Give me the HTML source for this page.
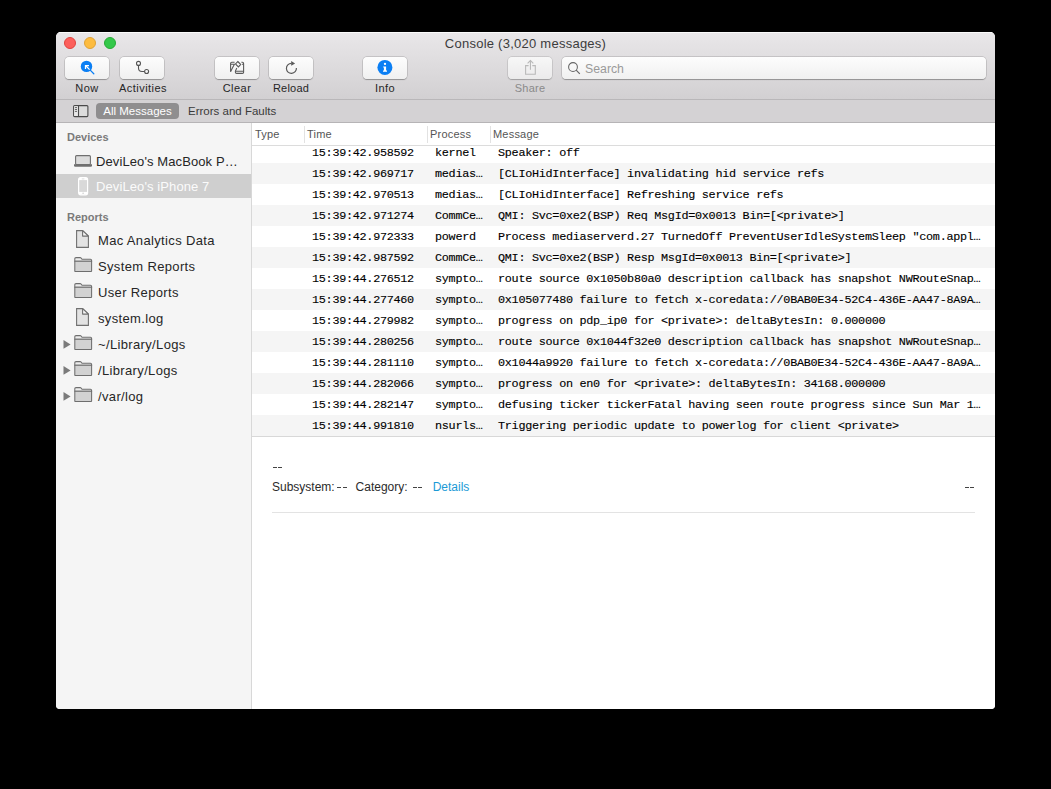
<!DOCTYPE html>
<html><head><meta charset="utf-8">
<style>
*{margin:0;padding:0;box-sizing:border-box}
html,body{width:1051px;height:789px;background:#000;overflow:hidden;font-family:"Liberation Sans",sans-serif}
svg{position:absolute;overflow:visible}
.win{position:absolute;left:56px;top:32px;width:939px;height:677px;border-radius:5px 5px 4px 4px;overflow:hidden;background:#fff}
.tb{position:absolute;left:0;top:0;width:939px;height:68px;background:linear-gradient(#e9e7e9,#d2d0d2);border-bottom:1px solid #b9b7b9;box-shadow:inset 0 1px 0 #fafafa}
.title{position:absolute;left:0;width:939px;top:4px;text-align:center;font-size:13px;letter-spacing:0.25px;color:#3c3c3c;line-height:16px}
.tl{position:absolute;top:5px;width:12px;height:12px;border-radius:50%}
.btn{position:absolute;top:25px;height:22px;width:44px;border-radius:4px;background:linear-gradient(#fdfdfd,#f0f0f0);box-shadow:0 0 0 0.5px rgba(0,0,0,0.2),0 0.5px 1px rgba(0,0,0,0.25)}
.lbl{position:absolute;top:49px;font-size:11px;letter-spacing:0.45px;color:#262626;text-align:center;width:80px;line-height:14px}
.sub{position:absolute;left:0;top:68px;width:939px;height:23px;background:#d4d2d4;border-bottom:1px solid #b6b4b6}
.pill{position:absolute;left:40px;top:3px;width:83px;height:16px;border-radius:4px;background:#8f8e8f;color:#fff;font-size:11.5px;line-height:16px;text-align:center}
.sub .ef{position:absolute;left:132px;top:3px;font-size:11.5px;line-height:16px;color:#3a3a3a}
.side{position:absolute;left:0;top:91px;width:196px;height:586px;background:#f5f5f5;border-right:1px solid #d8d8d8}
.sh{position:absolute;left:11px;font-size:11px;font-weight:bold;color:#7a7a7a;line-height:14px}
.si{position:absolute;left:0;width:195px;height:24px;font-size:13px;letter-spacing:0.25px;color:#262626;line-height:24px}
.si span{position:absolute;left:42px;top:-1px;letter-spacing:0.35px}
.dv span{left:40px;top:0;letter-spacing:0.1px}
.content{position:absolute;left:196px;top:91px;width:743px;height:586px;background:#fff}
.hdr{position:absolute;left:0;top:0;width:743px;height:23px;border-bottom:1px solid #dcdcdc;background:#fff;z-index:2}
.hdr span{position:absolute;top:4px;font-size:11px;letter-spacing:0.2px;color:#555;line-height:14px}
.hdr i{position:absolute;top:3px;width:1px;height:17px;background:#e2e2e2}
.rows{position:absolute;left:0;top:19px;width:743px}
.r{height:21px;position:relative;font-family:"Liberation Mono",monospace;font-size:11.8px;letter-spacing:-0.285px;color:#000;line-height:22px;white-space:pre;-webkit-text-stroke:0.12px #000}
.r:nth-child(even){background:#f5f5f5}
.r span{position:absolute;top:0}
.c1{left:60px}.c2{left:183px}.c3{left:246px}
.sep{position:absolute;left:0;top:313px;width:743px;height:1px;background:#d8d8d8}
.det{position:absolute;font-size:12px;color:#2b2b2b;line-height:15px}
.dd{position:absolute;width:9.6px;height:1.2px;background:linear-gradient(90deg,#444 0,#444 4.1px,transparent 4.1px,transparent 5.5px,#444 5.5px)}
</style></head><body>
<div class="win">
  <div class="tb">
    <div class="title">Console (3,020 messages)</div>
    <div class="tl" style="left:8px;background:#fc605c;border:0.5px solid #e0443e"></div>
    <div class="tl" style="left:28px;background:#fdbc40;border:0.5px solid #dea236"></div>
    <div class="tl" style="left:48px;background:#34c84a;border:0.5px solid #27aa35"></div>
    <div class="btn" style="left:9px"></div>
    <div class="btn" style="left:64px"></div>
    <div class="btn" style="left:159px"></div>
    <div class="btn" style="left:213px"></div>
    <div class="btn" style="left:307px"></div>
    <div class="btn" style="left:452px;opacity:0.8"></div>
    <div class="btn" style="left:506px;width:424px;border-radius:4px"></div>
    <!-- Now icon -->
    <svg style="left:20px;top:24px" width="24" height="22" viewBox="0 0 24 22">
      <circle cx="10.5" cy="10.4" r="5.7" fill="#0b7ff4"/>
      <line x1="14.2" y1="14.1" x2="17.8" y2="17.7" stroke="#0b7ff4" stroke-width="1.3" stroke-linecap="round"/>
      <line x1="9.5" y1="9.5" x2="13.6" y2="13.6" stroke="#fff" stroke-width="1.2"/>
      <path d="M13 9.5 H9.5 V13" fill="none" stroke="#fff" stroke-width="1.25"/><path d="M9 9 H11.2 L9 11.2 Z" fill="#fff"/>
    </svg>
    <!-- Activities icon -->
    <svg style="left:74px;top:24px" width="24" height="22" viewBox="0 0 24 22">
      <circle cx="8.5" cy="7.4" r="2" fill="none" stroke="#555" stroke-width="1.1"/>
      <circle cx="16.6" cy="15.5" r="2" fill="none" stroke="#555" stroke-width="1.1"/>
      <path d="M8.5 9.4 V12 Q8.5 15.5 12 15.5 H14.6" fill="none" stroke="#555" stroke-width="1.1"/>
    </svg>
    <!-- Clear icon -->
    <svg style="left:169px;top:24px" width="24" height="22" viewBox="0 0 24 22">
      <g fill="none" stroke="#5a5a5a" stroke-width="1.1">
        <path d="M5.6 15.8 V7.4 Q5.6 6.3 6.8 6.3 H9.6"/>
        <path d="M5.6 8.2 H9.4 L5.6 15.6"/>
        <path d="M12.8 5.5 L15.7 8.5 L13.4 10.9 L10.5 7.9 Z"/>
        <path d="M16.4 6.3 H17.4 Q18.6 6.3 18.6 7.5 V16.2 Q18.6 17.4 17.4 17.4 H11.6 Q10.4 17.4 10.4 16.2 V15 L11.8 12"/>
        <path d="M17 8.2 H18.6"/>
        <path d="M10.4 15.2 H18.6"/>
      </g>
    </svg>
    <!-- Reload icon -->
    <svg style="left:223px;top:24px" width="24" height="22" viewBox="0 0 24 22">
      <path d="M12.4 7.4 A5 5 0 1 0 17.4 12" fill="none" stroke="#5a5a5a" stroke-width="1.2"/>
      <path d="M12.2 5.1 L16.1 7.4 L12.2 9.8 Z" fill="#5a5a5a"/>
    </svg>
    <!-- Info icon -->
    <svg style="left:317px;top:24px" width="24" height="22" viewBox="0 0 24 22">
      <circle cx="11.9" cy="11.4" r="7.5" fill="#0b7ff4"/>
      <circle cx="12" cy="7.9" r="1.15" fill="#fff"/>
      <path d="M10.2 10.4 H13.1 V14.6 H14 V15.8 H10 V14.6 H10.9 V11.5 H10.2 Z" fill="#fff"/>
    </svg>
    <!-- Share icon -->
    <svg style="left:462px;top:24px" width="24" height="22" viewBox="0 0 24 22">
      <g fill="none" stroke="#b9b9b9" stroke-width="1.1">
        <path d="M10.6 9.6 H7.6 V18.3 H17.3 V9.6 H14.3"/>
        <path d="M12.45 13.8 V4.6"/>
        <path d="M9.6 7.3 L12.45 4.5 L15.3 7.3"/>
      </g>
    </svg>
    <!-- Search -->
    <svg style="left:504px;top:24px" width="30" height="22" viewBox="0 0 30 22">
      <circle cx="13" cy="11" r="4.4" fill="none" stroke="#666" stroke-width="1.05"/>
      <line x1="16.2" y1="14.2" x2="19.8" y2="17.8" stroke="#666" stroke-width="1.2"/>
    </svg>
    <div style="position:absolute;left:529px;top:30px;font-size:12.3px;color:#9a9a9a;line-height:14px">Search</div>
    <div class="lbl" style="left:-9px">Now</div>
    <div class="lbl" style="left:47px">Activities</div>
    <div class="lbl" style="left:141px">Clear</div>
    <div class="lbl" style="left:195px;letter-spacing:0.2px">Reload</div>
    <div class="lbl" style="left:289px">Info</div>
    <div class="lbl" style="left:434px;letter-spacing:0.25px;color:#8a8a8a">Share</div>
  </div>
  <div class="sub">
    <svg style="left:17px;top:5px" width="16" height="13" viewBox="0 0 16 13">
      <rect x="0.6" y="0.6" width="14.3" height="11" rx="1" fill="#dcdcdc" stroke="#4a4a4a" stroke-width="1.1"/>
      <rect x="1.2" y="1.2" width="4" height="9.8" fill="#e8e8e8"/>
      <line x1="5.5" y1="0.6" x2="5.5" y2="11.6" stroke="#4a4a4a" stroke-width="1.1"/>
      <g stroke="#555" stroke-width="0.9"><line x1="1.9" y1="2.6" x2="4" y2="2.6"/><line x1="1.9" y1="4.5" x2="4" y2="4.5"/><line x1="1.9" y1="6.4" x2="4" y2="6.4"/></g>
    </svg>
    <div class="pill">All Messages</div>
    <div class="ef">Errors and Faults</div>
  </div>
  <div class="side">
    <div class="sh" style="top:7px">Devices</div>
    <svg style="left:18px;top:32px" width="20" height="12" viewBox="0 0 20 12">
      <rect x="1.6" y="0.6" width="14.8" height="9" rx="1" fill="#dcdcdc" stroke="#6f6f6f" stroke-width="1.1"/>
      <path d="M0 9.2 H18 V10.4 Q18 11.7 16.8 11.7 H1.2 Q0 11.7 0 10.4 Z" fill="#6f6f6f"/>
    </svg>
    <div class="si dv" style="top:27px"><span>DeviLeo's MacBook P…</span></div>
    <div class="si dv" style="top:50.5px;background:#cfcfcf;color:#fbfbfb"><span style="top:1px">DeviLeo's iPhone 7</span></div>
    <svg style="left:21.6px;top:53.6px" width="11" height="19" viewBox="0 0 11 19">
      <rect x="0.6" y="0.6" width="9" height="17.2" rx="2" fill="#d9d9d9" stroke="#fff" stroke-width="1.2"/>
      <rect x="0.9" y="0.9" width="8.4" height="2.2" fill="#fff"/>
      <rect x="0.9" y="14.9" width="8.4" height="2.6" fill="#fff"/>
      <line x1="3.8" y1="1.9" x2="6.4" y2="1.9" stroke="#cfcfcf" stroke-width="0.7"/>
      <circle cx="5.1" cy="16.3" r="0.8" fill="#cfcfcf"/>
    </svg>
    <div class="sh" style="top:87px">Reports</div>
    <svg style="left:20px;top:107px" width="14" height="19" viewBox="0 0 14 19">
      <path d="M0.6 0.6 H6.6 L12.4 6.1 V17.4 H0.6 Z" fill="#e3e3e3" stroke="#707070" stroke-width="1.1"/>
      <path d="M6.6 0.6 V6.1 H12.4 Z" fill="#f7f7f7" stroke="#707070" stroke-width="1.1" stroke-linejoin="round"/>
    </svg>
    <div class="si" style="top:107px"><span>Mac Analytics Data</span></div>
    <svg style="left:18px;top:134px" width="19" height="16" viewBox="0 0 19 16">
      <path d="M0.8 4.3 V1.8 Q0.8 0.6 2 0.6 H6 Q6.8 0.6 7.3 1.3 L8 2.3 H16.5 Q17.6 2.3 17.6 3.4 V4.3 Z" fill="#ededed" stroke="#6e6e6e" stroke-width="1.05"/>
      <path d="M0.8 4.3 H17.6 V13.9 Q17.6 14.5 17 14.5 H1.4 Q0.8 14.5 0.8 13.9 Z" fill="#d2d2d2" stroke="#6e6e6e" stroke-width="1.05"/>
    </svg>
    <div class="si" style="top:133px"><span>System Reports</span></div>
    <svg style="left:18px;top:160px" width="19" height="16" viewBox="0 0 19 16">
      <path d="M0.8 4.3 V1.8 Q0.8 0.6 2 0.6 H6 Q6.8 0.6 7.3 1.3 L8 2.3 H16.5 Q17.6 2.3 17.6 3.4 V4.3 Z" fill="#ededed" stroke="#6e6e6e" stroke-width="1.05"/>
      <path d="M0.8 4.3 H17.6 V13.9 Q17.6 14.5 17 14.5 H1.4 Q0.8 14.5 0.8 13.9 Z" fill="#d2d2d2" stroke="#6e6e6e" stroke-width="1.05"/>
    </svg>
    <div class="si" style="top:159px"><span>User Reports</span></div>
    <svg style="left:20px;top:185px" width="14" height="19" viewBox="0 0 14 19">
      <path d="M0.6 0.6 H6.6 L12.4 6.1 V17.4 H0.6 Z" fill="#e3e3e3" stroke="#707070" stroke-width="1.1"/>
      <path d="M6.6 0.6 V6.1 H12.4 Z" fill="#f7f7f7" stroke="#707070" stroke-width="1.1" stroke-linejoin="round"/>
    </svg>
    <div class="si" style="top:185px"><span>system.log</span></div>
    <svg style="left:6.5px;top:217px" width="8" height="9" viewBox="0 0 8 9"><path d="M0.5 0 L7.6 4.4 L0.5 8.8 Z" fill="#7b7b7b"/></svg>
    <svg style="left:18px;top:212px" width="19" height="16" viewBox="0 0 19 16">
      <path d="M0.8 4.3 V1.8 Q0.8 0.6 2 0.6 H6 Q6.8 0.6 7.3 1.3 L8 2.3 H16.5 Q17.6 2.3 17.6 3.4 V4.3 Z" fill="#ededed" stroke="#6e6e6e" stroke-width="1.05"/>
      <path d="M0.8 4.3 H17.6 V13.9 Q17.6 14.5 17 14.5 H1.4 Q0.8 14.5 0.8 13.9 Z" fill="#d2d2d2" stroke="#6e6e6e" stroke-width="1.05"/>
    </svg>
    <div class="si" style="top:211px"><span>~/Library/Logs</span></div>
    <svg style="left:6.5px;top:243px" width="8" height="9" viewBox="0 0 8 9"><path d="M0.5 0 L7.6 4.4 L0.5 8.8 Z" fill="#7b7b7b"/></svg>
    <svg style="left:18px;top:238px" width="19" height="16" viewBox="0 0 19 16">
      <path d="M0.8 4.3 V1.8 Q0.8 0.6 2 0.6 H6 Q6.8 0.6 7.3 1.3 L8 2.3 H16.5 Q17.6 2.3 17.6 3.4 V4.3 Z" fill="#ededed" stroke="#6e6e6e" stroke-width="1.05"/>
      <path d="M0.8 4.3 H17.6 V13.9 Q17.6 14.5 17 14.5 H1.4 Q0.8 14.5 0.8 13.9 Z" fill="#d2d2d2" stroke="#6e6e6e" stroke-width="1.05"/>
    </svg>
    <div class="si" style="top:237px"><span>/Library/Logs</span></div>
    <svg style="left:6.5px;top:269px" width="8" height="9" viewBox="0 0 8 9"><path d="M0.5 0 L7.6 4.4 L0.5 8.8 Z" fill="#7b7b7b"/></svg>
    <svg style="left:18px;top:264px" width="19" height="16" viewBox="0 0 19 16">
      <path d="M0.8 4.3 V1.8 Q0.8 0.6 2 0.6 H6 Q6.8 0.6 7.3 1.3 L8 2.3 H16.5 Q17.6 2.3 17.6 3.4 V4.3 Z" fill="#ededed" stroke="#6e6e6e" stroke-width="1.05"/>
      <path d="M0.8 4.3 H17.6 V13.9 Q17.6 14.5 17 14.5 H1.4 Q0.8 14.5 0.8 13.9 Z" fill="#d2d2d2" stroke="#6e6e6e" stroke-width="1.05"/>
    </svg>
    <div class="si" style="top:263px"><span>/var/log</span></div>
  </div>
  <div class="content">
    <div class="hdr">
      <span style="left:3px">Type</span><i style="left:52px"></i>
      <span style="left:55px">Time</span><i style="left:175px"></i>
      <span style="left:178px">Process</span><i style="left:238px"></i>
      <span style="left:241px">Message</span>
    </div>
    <div class="rows">
      <div class="r"><span class="c1">15:39:42.958592</span><span class="c2">kernel</span><span class="c3">Speaker: off</span></div>
      <div class="r"><span class="c1">15:39:42.969717</span><span class="c2">medias…</span><span class="c3">[CLIoHidInterface] invalidating hid service refs</span></div>
      <div class="r"><span class="c1">15:39:42.970513</span><span class="c2">medias…</span><span class="c3">[CLIoHidInterface] Refreshing service refs</span></div>
      <div class="r"><span class="c1">15:39:42.971274</span><span class="c2">CommCe…</span><span class="c3">QMI: Svc=0xe2(BSP) Req MsgId=0x0013 Bin=[&lt;private&gt;]</span></div>
      <div class="r"><span class="c1">15:39:42.972333</span><span class="c2">powerd</span><span class="c3">Process mediaserverd.27 TurnedOff PreventUserIdleSystemSleep "com.appl…</span></div>
      <div class="r"><span class="c1">15:39:42.987592</span><span class="c2">CommCe…</span><span class="c3">QMI: Svc=0xe2(BSP) Resp MsgId=0x0013 Bin=[&lt;private&gt;]</span></div>
      <div class="r"><span class="c1">15:39:44.276512</span><span class="c2">sympto…</span><span class="c3">route source 0x1050b80a0 description callback has snapshot NWRouteSnap…</span></div>
      <div class="r"><span class="c1">15:39:44.277460</span><span class="c2">sympto…</span><span class="c3">0x105077480 failure to fetch x-coredata://0BAB0E34-52C4-436E-AA47-8A9A…</span></div>
      <div class="r"><span class="c1">15:39:44.279982</span><span class="c2">sympto…</span><span class="c3">progress on pdp_ip0 for &lt;private&gt;: deltaBytesIn: 0.000000</span></div>
      <div class="r"><span class="c1">15:39:44.280256</span><span class="c2">sympto…</span><span class="c3">route source 0x1044f32e0 description callback has snapshot NWRouteSnap…</span></div>
      <div class="r"><span class="c1">15:39:44.281110</span><span class="c2">sympto…</span><span class="c3">0x1044a9920 failure to fetch x-coredata://0BAB0E34-52C4-436E-AA47-8A9A…</span></div>
      <div class="r"><span class="c1">15:39:44.282066</span><span class="c2">sympto…</span><span class="c3">progress on en0 for &lt;private&gt;: deltaBytesIn: 34168.000000</span></div>
      <div class="r"><span class="c1">15:39:44.282147</span><span class="c2">sympto…</span><span class="c3">defusing ticker tickerFatal having seen route progress since Sun Mar 1…</span></div>
      <div class="r"><span class="c1">15:39:44.991810</span><span class="c2">nsurls…</span><span class="c3">Triggering periodic update to powerlog for client &lt;private&gt;</span></div>
    </div>
    <div class="sep"></div>
    <div class="dd" style="left:20.6px;top:343.8px"></div>
    <div class="det" style="left:20px;top:357px">Subsystem:</div>
    <div class="dd" style="left:85.4px;top:363.9px"></div>
    <div class="det" style="left:103.6px;top:357px">Category:</div>
    <div class="dd" style="left:160.7px;top:363.9px"></div>
    <div class="det" style="left:180.7px;top:357px;color:#1b9ad6">Details</div>
    <div class="dd" style="left:712.6px;top:363.9px"></div>
    <div style="position:absolute;left:20px;top:389px;width:703px;height:1px;background:#e3e3e3"></div>
  </div>
</div>
</body></html>
